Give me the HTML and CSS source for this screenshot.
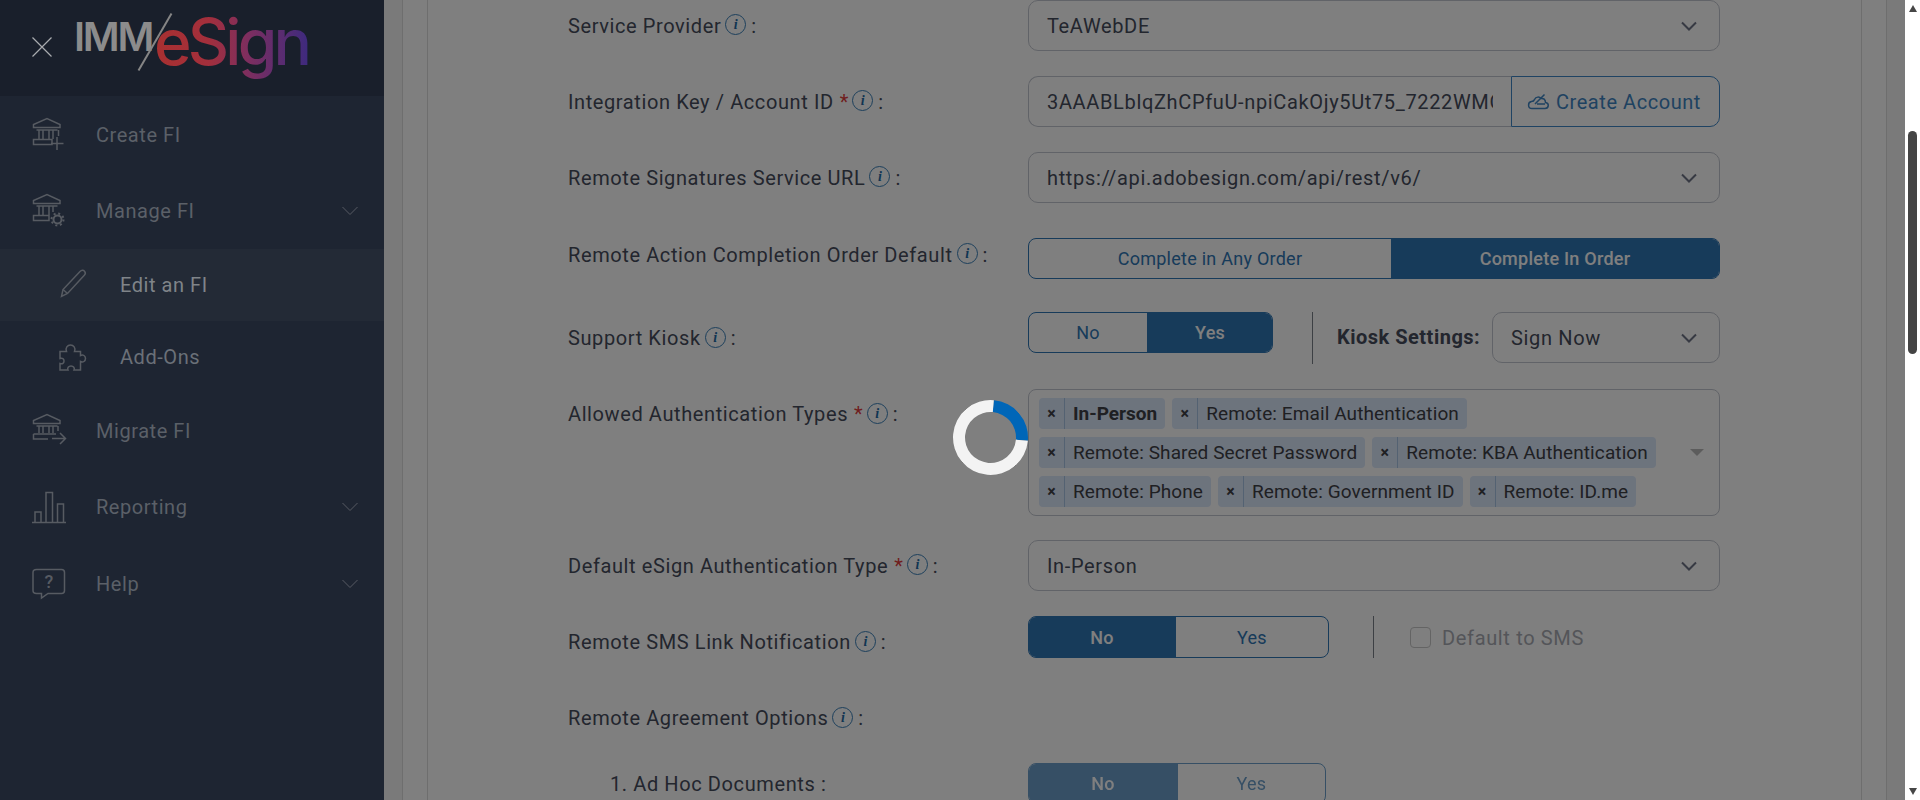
FILE: index.html
```html
<!DOCTYPE html>
<html lang="en">
<head>
<meta charset="utf-8">
<title>IMM eSign - Edit an FI</title>
<link rel="stylesheet" href="styles.css">
</head>
<body>
<div class="app">
  <aside class="sidebar">
    <header class="brand">
      <svg class="close" width="20" height="20" viewBox="0 0 20 20"><path d="M0.5 0.5L19.5 19.5M19.5 0.5L0.5 19.5"/></svg>
      <div class="logo">
        <span class="logo-imm">IMM</span>
        <span class="logo-slash"></span>
        <span class="logo-esign">eSign</span>
      </div>
    </header>
    <nav class="menu">
      <a class="item">
        <span class="slot"><svg class="ico" width="36" height="36" viewBox="0 0 36 36"><path d="M1.5 10.5V7.5L15 1.5L28 7.5V10.5Z"/><path d="M4.5 13H25.5M7 13V22M11 13V22M17 13V22M21 13V22M26.500 13V19"/><path d="M1.500 22.500H20V27.500H1.500Z"/><path d="M25 20V33M19 26.500H31.500"/></svg></span>
        Create FI
      </a>
      <a class="item">
        <span class="slot"><svg class="ico" width="36" height="36" viewBox="0 0 36 36"><path d="M1.5 10.5V7.5L15 1.500L28 7.500V10.500Z"/><path d="M4.500 13H25.500M7 13V22M11 13V22M17 13V22M21 13V19"/><path d="M1.500 22.500H17V27.500H1.500Z"/><circle cx="25.500" cy="26.500" r="4" stroke-width="2"/><circle cx="25.500" cy="26.500" r="6" stroke-width="2" stroke-dasharray="2 2.710"/></svg></span>
        Manage FI
        <svg class="chev" width="16" height="10" viewBox="0 0 16 10"><path d="M0.500 1L8 8.500L15.500 1"/></svg>
      </a>
      <a class="item sub active">
        <span class="slot"><svg class="ico" width="36" height="36" viewBox="0 0 36 36"><path d="M5.500 29.500L7 22.500L24 4.500C25.500 3 27.500 3 28.500 4.200C29.700 5.500 29.500 7 28.300 8.300L11.500 26.500Z"/><path d="M7 22.500L11.500 26.500"/></svg></span>
        Edit an FI
      </a>
      <a class="item sub">
        <span class="slot"><svg class="ico" width="36" height="36" viewBox="0 0 36 36"><path d="M4 12.500H10.500C9 9 11.500 6 14.500 6C17.500 6 20 9 18.500 12.500H24.500V16.500C27 15 29.500 17 29.500 19.500C29.500 22 27 24 24.500 22.500V31H18C19 29 17.500 27 15 27C12.500 27 11 29 12 31H4V24.500C6.500 25.500 8 24 8 22C8 20 6.500 18.500 4 19.500Z"/></svg></span>
        Add-Ons
      </a>
      <a class="item">
        <span class="slot"><svg class="ico" width="36" height="36" viewBox="0 0 36 36"><path d="M1.500 10.500V7.500L15 1.500L28 7.500V10.500Z"/><path d="M4.500 13H25.500M7 13V20M11 13V20M17 13V20M21 13V20M26 13V18"/><path d="M1.500 21V26H16"/><path d="M1.500 21H24"/><path d="M20 25.500H33.500M28 20L33.500 25.500L28 31"/></svg></span>
        Migrate FI
      </a>
      <a class="item">
        <span class="slot"><svg class="ico" width="36" height="36" viewBox="0 0 36 36"><path d="M0 33.500H34M3 33V23H9V33M14 33V3.500H20.500V33M25.500 33V15H31.500V33"/></svg></span>
        Reporting
        <svg class="chev" width="16" height="10" viewBox="0 0 16 10"><path d="M0.500 1L8 8.500L15.500 1"/></svg>
      </a>
      <a class="item gap">
        <span class="slot"><svg class="ico" width="36" height="36" viewBox="0 0 36 36"><path d="M4.500 3.500H29.500C31.500 3.500 32.500 4.800 32.500 6.500V24.500C32.500 26.300 31.300 27.500 29.500 27.500H16L9.500 32V27.500H4.500C2.500 27.500 1 26.300 1 24.500V6.500C1 4.800 2.500 3.500 4.500 3.500Z"/></svg><span class="q">?</span></span>
        Help
        <svg class="chev" width="16" height="10" viewBox="0 0 16 10"><path d="M0.500 1L8 8.500L15.500 1"/></svg>
      </a>
    </nav>
  </aside>

  <main class="main">
    <section class="card">
      <div class="inner">
        <form class="form">
          <div class="row first">
            <div class="lbl">Service Provider<i class="info">i</i><span class="colon">:</span></div>
            <div class="select"><span>TeAWebDE</span><svg class="caret" width="16" height="10" viewBox="0 0 16 10"><path d="M1 1.500L8 8.500L15 1.500"/></svg></div>
          </div>
          <div class="row">
            <div class="lbl">Integration Key / Account ID<b class="req">*</b><i class="info">i</i><span class="colon">:</span></div>
            <div class="group">
              <div class="input"><span class="clip">3AAABLblqZhCPfuU-npiCakOjy5Ut75_7222WMO4</span></div>
              <div class="addon"><svg class="cloud" width="24" height="18" viewBox="0 0 24 18"><path d="M6 15.500H19C23 15.500 23.500 10 19.500 9.500C19.500 6.500 17.500 5 15 5.500C13.500 3.500 10 3.500 8.500 6.500C8 8 7.500 8.500 5.500 8.500C1.500 9 1.500 15.500 6 15.500Z"/><path d="M9 11L18.500 1.500M11 11H19"/></svg>Create Account</div>
            </div>
          </div>
          <div class="row">
            <div class="lbl">Remote Signatures Service URL<i class="info">i</i><span class="colon">:</span></div>
            <div class="select"><span>https://api.adobesign.com/api/rest/v6/</span><svg class="caret" width="16" height="10" viewBox="0 0 16 10"><path d="M1 1.500L8 8.500L15 1.500"/></svg></div>
          </div>
          <div class="row r-order">
            <div class="lbl lift">Remote Action Completion Order Default<i class="info">i</i><span class="colon">:</span></div>
            <div class="toggle t-order"><span class="opt">Complete in Any Order</span><span class="opt on">Complete In Order</span></div>
          </div>
          <div class="row r-kiosk">
            <div class="lbl">Support Kiosk<i class="info">i</i><span class="colon">:</span></div>
            <div class="cluster">
              <div class="toggle t-kiosk"><span class="opt">No</span><span class="opt on">Yes</span></div>
              <span class="vr vr-tall"></span>
              <strong class="kiosk-lbl">Kiosk Settings:</strong>
              <div class="select s-kiosk"><span>Sign Now</span><svg class="caret" width="16" height="10" viewBox="0 0 16 10"><path d="M1 1.500L8 8.500L15 1.500"/></svg></div>
            </div>
          </div>
          <div class="row r-tags">
            <div class="lbl top">Allowed Authentication Types<b class="req">*</b><i class="info">i</i><span class="colon">:</span></div>
            <div class="tagbox">
              <div class="tags">
                <span class="tag"><span class="x">×</span><strong class="t">In-Person</strong></span>
                <span class="tag"><span class="x">×</span><span class="t">Remote: Email Authentication</span></span>
                <span class="tag"><span class="x">×</span><span class="t">Remote: Shared Secret Password</span></span>
                <span class="tag"><span class="x">×</span><span class="t">Remote: KBA Authentication</span></span>
                <span class="tag"><span class="x">×</span><span class="t">Remote: Phone</span></span>
                <span class="tag"><span class="x">×</span><span class="t">Remote: Government ID</span></span>
                <span class="tag"><span class="x">×</span><span class="t">Remote: ID.me</span></span>
              </div>
              <span class="tri"></span>
            </div>
          </div>
          <div class="row r-default">
            <div class="lbl">Default eSign Authentication Type<b class="req">*</b><i class="info">i</i><span class="colon">:</span></div>
            <div class="select"><span>In-Person</span><svg class="caret" width="16" height="10" viewBox="0 0 16 10"><path d="M1 1.500L8 8.500L15 1.500"/></svg></div>
          </div>
          <div class="row r-sms">
            <div class="lbl">Remote SMS Link Notification<i class="info">i</i><span class="colon">:</span></div>
            <div class="cluster">
              <div class="toggle t-sms"><span class="opt on">No</span><span class="opt">Yes</span></div>
              <span class="vr"></span>
              <span class="check"></span>
              <span class="check-lbl">Default to SMS</span>
            </div>
          </div>
          <div class="row r-options">
            <div class="lbl">Remote Agreement Options<i class="info">i</i><span class="colon">:</span></div>
          </div>
          <div class="row r-adhoc">
            <div class="lbl indent">1. Ad Hoc Documents :</div>
            <div class="toggle t-adhoc"><span class="opt on">No</span><span class="opt">Yes</span></div>
          </div>
        </form>
      </div>
    </section>
    <div class="overlay"></div>
    <div class="spinner"></div>
  </main>

  <div class="scrollbar">
    <span class="sb-up"></span>
    <span class="sb-thumb"></span>
    <span class="sb-down"></span>
  </div>
</div>
</body>
</html>
```
FILE: styles.css
```css
* { box-sizing: border-box; }
html, body { margin: 0; height: 100%; overflow: hidden; }
body { font-family: Roboto, "Liberation Sans", sans-serif; font-size: 20px; background: #fff; }
.app { display: flex; height: 800px; width: 1920px; }

/* sidebar */
.sidebar { width: 384px; flex: none; background: #1e2532; color: #5b6068; }
.brand { height: 96px; background: #191f2b; display: flex; align-items: flex-start; padding: 37px 0 0 32px; margin-bottom: 1px; position: relative; }
.close { flex: none; }
.close path { stroke: #a9abae; stroke-width: 1.2; fill: none; }
.logo { position: absolute; left: 76px; top: 0; height: 96px; width: 240px; font-family: Inter, Roboto, sans-serif; }
.logo-imm { position: absolute; left: -2px; top: 15px; font-size: 40px; line-height: 44px; font-weight: 600; color: #8c8c8c; letter-spacing: -2.2px; }
.logo-slash { position: absolute; left: 78px; top: 9px; width: 2px; height: 66px; background: #858585; transform: rotate(30deg); }
.logo-esign { position: absolute; left: 78px; top: 2px; font-size: 64px; line-height: 80px; font-weight: 500; letter-spacing: -3.8px; background: linear-gradient(90deg, #a83030 0%, #a32f3c 35%, #7c2e60 62%, #3e2a7e 100%); -webkit-background-clip: text; background-clip: text; color: transparent; }
.menu { display: flex; flex-direction: column; }
.item { height: 76px; display: flex; align-items: center; padding-left: 32px; padding-right: 26px; font-size: 20px; letter-spacing: .55px; position: relative; }
.item.gap { margin-top: 1px; }
.item.sub { height: 72px; padding-left: 56px; color: #6a7078; }
.item.active { background: #232a36; color: #7f8489; }
.slot { width: 64px; height: 36px; flex: none; position: relative; }
.ico { display: block; fill: none; stroke: #575b62; stroke-width: 1.5; }
.chev { margin-left: auto; fill: none; stroke: #575b62; stroke-width: 1; }
.q { position: absolute; left: 10px; top: 6px; width: 14px; text-align: center; font-size: 18px; line-height: 20px; font-weight: 500; color: #575b62; letter-spacing: 0; }

/* main */
.main { flex: 1; min-width: 0; position: relative; background: #f5f5f5; padding: 0 18px; overflow: hidden; }
.card { background: #fff; border: 0 solid #dcdcdc; border-width: 0 1px; height: 100%; padding: 0 24px; }
.inner { border: 0 solid #dcdcdc; border-width: 0 1px; height: 100%; padding: 0 141px 0 140px; }
.form { display: flex; flex-direction: column; }

.row { display: grid; grid-template-columns: 460px 692px; align-items: center; margin-top: 25px; }
.row.first { margin-top: 0; }
.r-order { margin-top: 35px; }
.r-kiosk { margin-top: 33px; }
.r-tags { margin-top: 25px; align-items: start; }
.r-default { margin-top: 24px; }
.r-sms { height: 52px; }
.r-options { margin-top: 26px; height: 48px; }
.r-adhoc { margin-top: 21px; }

.lbl { color: #464c5c; letter-spacing: .6px; white-space: nowrap; display: flex; align-items: center; }
.lift { margin-bottom: 8px; }
.top { padding-top: 13px; }
.indent { padding-left: 42px; }
.req { color: #e03c3c; font-weight: 400; margin-left: 6px; font-size: 20px; line-height: 20px; letter-spacing: 0; }
.info { width: 21px; height: 21px; border: 1px solid #3a7fb8; border-radius: 50%; margin-left: 4px; position: relative; top: -1px; font: italic 700 14px/19px "Liberation Serif", serif; color: #1f6aa5; text-align: center; letter-spacing: 0; }
.colon { margin-left: 5px; }

.select, .input { height: 51px; border: 1px solid #c3c7d0; border-radius: 10px; background: #fff; color: #464c5c; letter-spacing: .65px; display: flex; align-items: center; padding: 0 22px 0 18px; min-width: 0; }
.select { justify-content: space-between; }
.caret { fill: none; stroke: #6f7486; stroke-width: 2; flex: none; }
.group { display: flex; height: 51px; }
.input { flex: 1; border-right: 0; border-radius: 10px 0 0 10px; padding-right: 18px; overflow: hidden; }
.clip { overflow: hidden; white-space: nowrap; }
.addon { width: 209px; flex: none; border: 1px solid #3e87c6; border-radius: 0 10px 10px 0; color: #3e84c2; display: flex; align-items: center; padding-left: 14px; letter-spacing: .55px; white-space: nowrap; }
.cloud { fill: none; stroke: #3e84c2; stroke-width: 1.5; margin-right: 6px; flex: none; }

.toggle { display: flex; height: 41px; border: 1px solid #2f76b4; border-radius: 8px; overflow: hidden; font-size: 18px; color: #2f76b4; letter-spacing: .25px; }
.opt { display: flex; align-items: center; justify-content: center; }
.opt.on { background: #2f76b4; color: #fff; font-weight: 500; }
.t-order { width: 692px; }
.t-order .opt { width: 362px; }
.t-order .opt.on { flex: 1; }
.t-kiosk { width: 245px; }
.t-kiosk .opt { width: 118px; }
.t-kiosk .opt.on { flex: 1; border-left: 1px solid #2f76b4; }
.t-sms { width: 301px; height: 42px; }
.t-sms .opt { width: 146px; }
.t-sms .opt + .opt { flex: 1; border-left: 1px solid #2f76b4; }
.t-adhoc { width: 298px; opacity: .7; }
.t-adhoc .opt { width: 148px; }
.t-adhoc .opt + .opt { flex: 1; border-left: 1px solid #2f76b4; }

.cluster { display: flex; align-items: flex-start; align-self: start; }
.vr { width: 1px; height: 42px; background: #7b8088; margin-left: 44px; flex: none; }
.vr-tall { height: 52px; margin-left: 39px; }
.kiosk-lbl { font-weight: 700; color: #464c5c; letter-spacing: .5px; margin-left: 24px; height: 51px; line-height: 51px; white-space: nowrap; width: 155px; flex: none; }
.s-kiosk { width: 228px; flex: none; }
.check { width: 21px; height: 21px; border: 1px solid #c8c8c8; border-radius: 4px; margin: 11px 0 0 36px; flex: none; }
.check-lbl { color: #a8abb3; letter-spacing: .65px; margin-left: 11px; line-height: 44px; }

.tagbox { height: 127px; border: 1px solid #c3c7d0; border-radius: 8px; display: flex; align-items: center; padding: 0 15px 0 10px; background: #fff; }
.tags { flex: 1; display: flex; flex-wrap: wrap; gap: 8px 7px; font-size: 19px; }
.tag { display: flex; height: 31px; background: #dbe8fb; border-radius: 4px; color: #3f4046; letter-spacing: .1px; line-height: 31px; }
.x { width: 26px; flex: none; text-align: center; border-right: 1px solid #a8c4e4; font-weight: 700; font-size: 16px; }
.t { padding: 0 8px; white-space: nowrap; }
strong.t { font-weight: 700; letter-spacing: 0; }
.tri { width: 0; height: 0; border: 7px solid transparent; border-top-color: #b9b9b9; border-bottom: 0; flex: none; }

/* dim layer + spinner */
.overlay { position: absolute; inset: 0; background: rgba(0, 0, 0, .5); }
.spinner { position: absolute; left: 569px; top: 400px; width: 75px; height: 75px; border-radius: 50%; border: 12px solid #f3f3f3; border-top-color: #0066b8; transform: rotate(50deg); }

/* page scrollbar */
.scrollbar { width: 15px; flex: none; background: #fff; position: relative; display: flex; flex-direction: column; align-items: center; }
.sb-up { width: 0; height: 0; border: 4.5px solid transparent; border-bottom: 7px solid #464646; border-top: 0; margin-top: 5px; }
.sb-thumb { width: 9px; height: 223px; background: #444; border-radius: 5px; margin-top: 119px; }
.sb-down { width: 0; height: 0; border: 4.5px solid transparent; border-top: 7px solid #464646; border-bottom: 0; margin-top: auto; margin-bottom: 5px; }
```
